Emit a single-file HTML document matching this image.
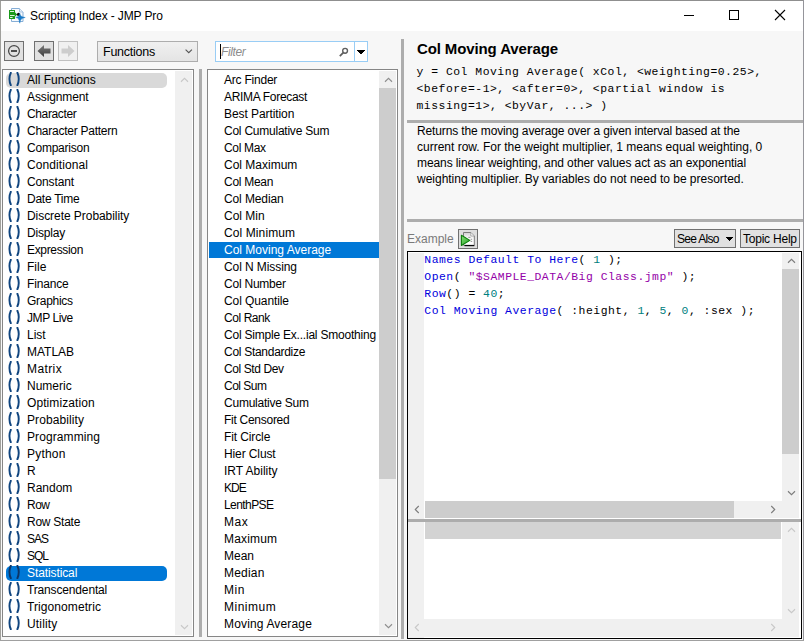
<!DOCTYPE html>
<html><head><meta charset="utf-8"><title>Scripting Index - JMP Pro</title>
<style>
html,body{margin:0;padding:0}
body{width:804px;height:641px;overflow:hidden;background:#f7f7f7;position:relative;font-family:"Liberation Sans",sans-serif;font-size:12px;color:#000}
div,span,svg{position:absolute;box-sizing:border-box}
.t{white-space:nowrap}
#titlebar{left:1px;top:1px;width:803px;height:30px;background:#fff}
#bt{left:0;top:0;width:804px;height:1px;background:#8f8f8f}
#bl{left:0;top:1px;width:1px;height:640px;background:#a0a09c}
#br{left:803px;top:0;width:1px;height:641px;background:#95959b}
#bb{left:0;top:640px;width:804px;height:1px;background:#a0a0a0}
.btn{background:#e1e1e1;border:1px solid #707070}
.btn.dis{background:#f0f0f0;border-color:#c0c0c0}
.panel{background:#fff;border:1px solid #868686}
.split{background:#adadad}
.row{left:3px;width:161px;height:15px;border-radius:5px;line-height:14px}
.row.hot{background:#d9d9d9}
.row.sel{background:#0078d7;color:#fff}
.row .t{left:21px;top:0}
.pa{left:1px;top:-1px;fill:none;stroke:#10457f;stroke-width:1.9}
.row.sel .pa{stroke:#0d3565}
.mrow{left:1px;width:170px;height:16px;line-height:16px}
.mrow.sel{background:#0078d7;color:#fff}
.mrow .t{left:15px;top:0}
.sb{background:#f0f0f0}
.thumb{background:#cdcdcd}
.ch{fill:none;stroke:#606060;stroke-width:1.1}
.ch.dis{stroke:#c8c8c8}.ch.mid{stroke:#8e8e8e}.ch.en{stroke:#7c7c7c}
.mono{font-family:"Liberation Mono",monospace;font-size:11.4px;letter-spacing:0.512px;white-space:pre}
.kw{color:#0000dd}.num{color:#008080}.str{color:#9400a8}
</style></head><body>
<div id="titlebar"></div><div id="bt"></div><div id="bl"></div><div id="br"></div><div id="bb"></div>
<!-- app icon -->
<svg style="left:8px;top:7px" width="18" height="18" viewBox="0 0 18 18">
<path d="M3.5,1.5 H11.5 L15,5 V14.5 H3.5 Z" fill="#f7fafd" stroke="#86aed6" stroke-width="1"/>
<path d="M11.5,1.5 V5 H15" fill="#e6eef7" stroke="#9dbde0" stroke-width="0.9"/>
<path d="M1,3 H7 V5.2 L9.2,7.5 L7,9.8 V12 H1 Z" fill="#1b9a1b"/>
<rect x="2" y="4" width="4" height="1" fill="#dff3df"/><rect x="2" y="8" width="4.6" height="1" fill="#dff3df"/><rect x="2" y="10" width="2.6" height="1" fill="#dff3df"/>
<circle cx="10.5" cy="7.4" r="1.6" fill="#0a0a0a"/>
<path d="M11.75,6.3 Q12.1,10.1 17.2,10.5 Q12.1,10.9 11.75,16.2 Q11.4,10.9 7.8,10.5 Q11.4,10.1 11.75,6.3 Z" fill="#1679c6" stroke="#1679c6" stroke-width="0.5"/>
</svg>
<span class="t" style="left:30px;top:8px;line-height:16px;font-size:12px;letter-spacing:-0.125px">Scripting Index - JMP Pro</span>
<!-- window controls -->
<svg style="left:680px;top:5px" width="120" height="22" viewBox="0 0 120 22" shape-rendering="crispEdges">
<rect x="4" y="10" width="10" height="1" fill="#000"/>
<rect x="49.5" y="5.5" width="9" height="9" fill="none" stroke="#000" stroke-width="1"/>
</svg>
<svg style="left:774px;top:9px" width="12" height="12" viewBox="0 0 12 12"><path d="M1,1 L11,11 M11,1 L1,11" stroke="#000" stroke-width="1.1" fill="none"/></svg>

<!-- toolbar -->
<div class="btn" style="left:4px;top:41px;width:20px;height:20px">
<svg style="left:2px;top:2px" width="14" height="14" viewBox="0 0 14 14"><circle cx="7" cy="7" r="5.4" fill="none" stroke="#444" stroke-width="1.2"/><rect x="4" y="6.1" width="6" height="1.8" fill="#3e3e3e"/></svg>
</div>
<div class="btn" style="left:34px;top:41px;width:20px;height:20px">
<svg style="left:2px;top:2px" width="14" height="14" viewBox="0 0 14 14"><defs><linearGradient id="ga" x1="0" y1="0" x2="0" y2="1"><stop offset="0" stop-color="#7a7a7a"/><stop offset="1" stop-color="#3c3c3c"/></linearGradient></defs><path d="M0.5,7 L7,1 V4.5 H13.5 V9.5 H7 V13 Z" fill="url(#ga)"/></svg>
</div>
<div class="btn dis" style="left:58px;top:41px;width:20px;height:20px">
<svg style="left:2px;top:2px" width="14" height="14" viewBox="0 0 14 14"><path d="M13.5,7 L7,1 V4.5 H0.5 V9.5 H7 V13 Z" fill="#cdcdcd"/></svg>
</div>
<div class="btn" style="left:97px;top:41px;width:101px;height:21px;border-color:#adadad;background:linear-gradient(#f0f0f0,#e4e4e4)">
<span class="t" style="left:5px;top:2px;line-height:16px;font-size:12.5px;letter-spacing:-0.251px">Functions</span>
<svg style="left:87px;top:7px" width="8" height="5" viewBox="0 0 8 5"><path d="M0.6,0.6 L3.75,3.75 L6.9,0.6" class="ch" style="stroke:#555"/></svg>
</div>
<div style="left:215px;top:41px;width:153px;height:21px;background:#fff;border:1px solid #99cdf5">
<div style="left:4px;top:2px;width:1px;height:15px;background:#000"></div>
<span class="t" style="left:5px;top:2px;line-height:16px;font-style:italic;color:#8c8c8c;font-size:12px;letter-spacing:-0.400px">Filter</span>
<svg style="left:122px;top:3.5px" width="12" height="12" viewBox="0 0 12 12"><circle cx="7.1" cy="4.8" r="2.4" fill="none" stroke="#5e5e5e" stroke-width="1.4"/><path d="M5.3,6.6 L1.8,10.1" stroke="#5e5e5e" stroke-width="1.8"/></svg>
<div style="left:138px;top:0;width:1px;height:19px;background:#99cdf5"></div>
<svg style="left:141px;top:8px" width="8" height="4" viewBox="0 0 8 4" shape-rendering="crispEdges"><rect x="0" y="0" width="8" height="1"/><rect x="1" y="1" width="6" height="1"/><rect x="2" y="2" width="4" height="1"/><rect x="3" y="3" width="2" height="1"/></svg>
</div>

<!-- left list -->
<div class="panel" style="left:2px;top:69px;width:192px;height:568px">
<div class="row hot" style="top:3px"><svg class="pa" width="14" height="14" viewBox="0 0 14 14"><path d="M4.1,0 Q0.8,7 4.1,14" /><path d="M10.1,0 Q13.4,7 10.1,14" /></svg><span class="t" style="letter-spacing:0.000px">All Functions</span></div>
<div class="row" style="top:20px"><svg class="pa" width="14" height="14" viewBox="0 0 14 14"><path d="M4.1,0 Q0.8,7 4.1,14" /><path d="M10.1,0 Q13.4,7 10.1,14" /></svg><span class="t" style="letter-spacing:-0.111px">Assignment</span></div>
<div class="row" style="top:37px"><svg class="pa" width="14" height="14" viewBox="0 0 14 14"><path d="M4.1,0 Q0.8,7 4.1,14" /><path d="M10.1,0 Q13.4,7 10.1,14" /></svg><span class="t" style="letter-spacing:-0.375px">Character</span></div>
<div class="row" style="top:54px"><svg class="pa" width="14" height="14" viewBox="0 0 14 14"><path d="M4.1,0 Q0.8,7 4.1,14" /><path d="M10.1,0 Q13.4,7 10.1,14" /></svg><span class="t" style="letter-spacing:-0.250px">Character Pattern</span></div>
<div class="row" style="top:71px"><svg class="pa" width="14" height="14" viewBox="0 0 14 14"><path d="M4.1,0 Q0.8,7 4.1,14" /><path d="M10.1,0 Q13.4,7 10.1,14" /></svg><span class="t" style="letter-spacing:-0.223px">Comparison</span></div>
<div class="row" style="top:88px"><svg class="pa" width="14" height="14" viewBox="0 0 14 14"><path d="M4.1,0 Q0.8,7 4.1,14" /><path d="M10.1,0 Q13.4,7 10.1,14" /></svg><span class="t" style="letter-spacing:0.100px">Conditional</span></div>
<div class="row" style="top:105px"><svg class="pa" width="14" height="14" viewBox="0 0 14 14"><path d="M4.1,0 Q0.8,7 4.1,14" /><path d="M10.1,0 Q13.4,7 10.1,14" /></svg><span class="t" style="letter-spacing:-0.143px">Constant</span></div>
<div class="row" style="top:122px"><svg class="pa" width="14" height="14" viewBox="0 0 14 14"><path d="M4.1,0 Q0.8,7 4.1,14" /><path d="M10.1,0 Q13.4,7 10.1,14" /></svg><span class="t" style="letter-spacing:-0.250px">Date Time</span></div>
<div class="row" style="top:139px"><svg class="pa" width="14" height="14" viewBox="0 0 14 14"><path d="M4.1,0 Q0.8,7 4.1,14" /><path d="M10.1,0 Q13.4,7 10.1,14" /></svg><span class="t" style="letter-spacing:-0.053px">Discrete Probability</span></div>
<div class="row" style="top:156px"><svg class="pa" width="14" height="14" viewBox="0 0 14 14"><path d="M4.1,0 Q0.8,7 4.1,14" /><path d="M10.1,0 Q13.4,7 10.1,14" /></svg><span class="t" style="letter-spacing:-0.167px">Display</span></div>
<div class="row" style="top:173px"><svg class="pa" width="14" height="14" viewBox="0 0 14 14"><path d="M4.1,0 Q0.8,7 4.1,14" /><path d="M10.1,0 Q13.4,7 10.1,14" /></svg><span class="t" style="letter-spacing:-0.334px">Expression</span></div>
<div class="row" style="top:190px"><svg class="pa" width="14" height="14" viewBox="0 0 14 14"><path d="M4.1,0 Q0.8,7 4.1,14" /><path d="M10.1,0 Q13.4,7 10.1,14" /></svg><span class="t" style="letter-spacing:0.000px">File</span></div>
<div class="row" style="top:207px"><svg class="pa" width="14" height="14" viewBox="0 0 14 14"><path d="M4.1,0 Q0.8,7 4.1,14" /><path d="M10.1,0 Q13.4,7 10.1,14" /></svg><span class="t" style="letter-spacing:-0.167px">Finance</span></div>
<div class="row" style="top:224px"><svg class="pa" width="14" height="14" viewBox="0 0 14 14"><path d="M4.1,0 Q0.8,7 4.1,14" /><path d="M10.1,0 Q13.4,7 10.1,14" /></svg><span class="t" style="letter-spacing:-0.286px">Graphics</span></div>
<div class="row" style="top:241px"><svg class="pa" width="14" height="14" viewBox="0 0 14 14"><path d="M4.1,0 Q0.8,7 4.1,14" /><path d="M10.1,0 Q13.4,7 10.1,14" /></svg><span class="t" style="letter-spacing:-0.429px">JMP Live</span></div>
<div class="row" style="top:258px"><svg class="pa" width="14" height="14" viewBox="0 0 14 14"><path d="M4.1,0 Q0.8,7 4.1,14" /><path d="M10.1,0 Q13.4,7 10.1,14" /></svg><span class="t" style="letter-spacing:0.000px">List</span></div>
<div class="row" style="top:275px"><svg class="pa" width="14" height="14" viewBox="0 0 14 14"><path d="M4.1,0 Q0.8,7 4.1,14" /><path d="M10.1,0 Q13.4,7 10.1,14" /></svg><span class="t" style="letter-spacing:0.000px">MATLAB</span></div>
<div class="row" style="top:292px"><svg class="pa" width="14" height="14" viewBox="0 0 14 14"><path d="M4.1,0 Q0.8,7 4.1,14" /><path d="M10.1,0 Q13.4,7 10.1,14" /></svg><span class="t" style="letter-spacing:0.400px">Matrix</span></div>
<div class="row" style="top:309px"><svg class="pa" width="14" height="14" viewBox="0 0 14 14"><path d="M4.1,0 Q0.8,7 4.1,14" /><path d="M10.1,0 Q13.4,7 10.1,14" /></svg><span class="t" style="letter-spacing:0.000px">Numeric</span></div>
<div class="row" style="top:326px"><svg class="pa" width="14" height="14" viewBox="0 0 14 14"><path d="M4.1,0 Q0.8,7 4.1,14" /><path d="M10.1,0 Q13.4,7 10.1,14" /></svg><span class="t" style="letter-spacing:0.091px">Optimization</span></div>
<div class="row" style="top:343px"><svg class="pa" width="14" height="14" viewBox="0 0 14 14"><path d="M4.1,0 Q0.8,7 4.1,14" /><path d="M10.1,0 Q13.4,7 10.1,14" /></svg><span class="t" style="letter-spacing:0.100px">Probability</span></div>
<div class="row" style="top:360px"><svg class="pa" width="14" height="14" viewBox="0 0 14 14"><path d="M4.1,0 Q0.8,7 4.1,14" /><path d="M10.1,0 Q13.4,7 10.1,14" /></svg><span class="t" style="letter-spacing:0.100px">Programming</span></div>
<div class="row" style="top:377px"><svg class="pa" width="14" height="14" viewBox="0 0 14 14"><path d="M4.1,0 Q0.8,7 4.1,14" /><path d="M10.1,0 Q13.4,7 10.1,14" /></svg><span class="t" style="letter-spacing:0.200px">Python</span></div>
<div class="row" style="top:394px"><svg class="pa" width="14" height="14" viewBox="0 0 14 14"><path d="M4.1,0 Q0.8,7 4.1,14" /><path d="M10.1,0 Q13.4,7 10.1,14" /></svg><span class="t" style="letter-spacing:-2.000px">R</span></div>
<div class="row" style="top:411px"><svg class="pa" width="14" height="14" viewBox="0 0 14 14"><path d="M4.1,0 Q0.8,7 4.1,14" /><path d="M10.1,0 Q13.4,7 10.1,14" /></svg><span class="t" style="letter-spacing:0.000px">Random</span></div>
<div class="row" style="top:428px"><svg class="pa" width="14" height="14" viewBox="0 0 14 14"><path d="M4.1,0 Q0.8,7 4.1,14" /><path d="M10.1,0 Q13.4,7 10.1,14" /></svg><span class="t" style="letter-spacing:-0.500px">Row</span></div>
<div class="row" style="top:445px"><svg class="pa" width="14" height="14" viewBox="0 0 14 14"><path d="M4.1,0 Q0.8,7 4.1,14" /><path d="M10.1,0 Q13.4,7 10.1,14" /></svg><span class="t" style="letter-spacing:-0.250px">Row State</span></div>
<div class="row" style="top:462px"><svg class="pa" width="14" height="14" viewBox="0 0 14 14"><path d="M4.1,0 Q0.8,7 4.1,14" /><path d="M10.1,0 Q13.4,7 10.1,14" /></svg><span class="t" style="letter-spacing:-1.000px">SAS</span></div>
<div class="row" style="top:479px"><svg class="pa" width="14" height="14" viewBox="0 0 14 14"><path d="M4.1,0 Q0.8,7 4.1,14" /><path d="M10.1,0 Q13.4,7 10.1,14" /></svg><span class="t" style="letter-spacing:-1.000px">SQL</span></div>
<div class="row sel" style="top:496px"><svg class="pa" width="14" height="14" viewBox="0 0 14 14"><path d="M4.1,0 Q0.8,7 4.1,14" /><path d="M10.1,0 Q13.4,7 10.1,14" /></svg><span class="t" style="letter-spacing:-0.100px">Statistical</span></div>
<div class="row" style="top:513px"><svg class="pa" width="14" height="14" viewBox="0 0 14 14"><path d="M4.1,0 Q0.8,7 4.1,14" /><path d="M10.1,0 Q13.4,7 10.1,14" /></svg><span class="t" style="letter-spacing:-0.154px">Transcendental</span></div>
<div class="row" style="top:530px"><svg class="pa" width="14" height="14" viewBox="0 0 14 14"><path d="M4.1,0 Q0.8,7 4.1,14" /><path d="M10.1,0 Q13.4,7 10.1,14" /></svg><span class="t" style="letter-spacing:0.084px">Trigonometric</span></div>
<div class="row" style="top:547px"><svg class="pa" width="14" height="14" viewBox="0 0 14 14"><path d="M4.1,0 Q0.8,7 4.1,14" /><path d="M10.1,0 Q13.4,7 10.1,14" /></svg><span class="t" style="letter-spacing:0.166px">Utility</span></div>
<div class="sb" style="left:172px;top:1px;width:17px;height:564px">
</div>
</div>
<div class="split" style="left:199px;top:69px;width:3px;height:568px"></div>
<!-- middle list -->
<div class="panel" style="left:207px;top:69px;width:191px;height:568px">
<div class="mrow" style="top:2px"><span class="t" style="letter-spacing:-0.222px">Arc Finder</span></div>
<div class="mrow" style="top:19px"><span class="t" style="letter-spacing:-0.308px">ARIMA Forecast</span></div>
<div class="mrow" style="top:36px"><span class="t" style="letter-spacing:-0.077px">Best Partition</span></div>
<div class="mrow" style="top:53px"><span class="t" style="letter-spacing:-0.235px">Col Cumulative Sum</span></div>
<div class="mrow" style="top:70px"><span class="t" style="letter-spacing:-0.333px">Col Max</span></div>
<div class="mrow" style="top:87px"><span class="t" style="letter-spacing:0.000px">Col Maximum</span></div>
<div class="mrow" style="top:104px"><span class="t" style="letter-spacing:-0.286px">Col Mean</span></div>
<div class="mrow" style="top:121px"><span class="t" style="letter-spacing:-0.112px">Col Median</span></div>
<div class="mrow" style="top:138px"><span class="t" style="letter-spacing:-0.000px">Col Min</span></div>
<div class="mrow" style="top:155px"><span class="t" style="letter-spacing:0.100px">Col Minimum</span></div>
<div class="mrow sel" style="top:172px"><span class="t" style="letter-spacing:0.000px">Col Moving Average</span></div>
<div class="mrow" style="top:189px"><span class="t" style="letter-spacing:-0.083px">Col N Missing</span></div>
<div class="mrow" style="top:206px"><span class="t" style="letter-spacing:-0.223px">Col Number</span></div>
<div class="mrow" style="top:223px"><span class="t" style="letter-spacing:-0.091px">Col Quantile</span></div>
<div class="mrow" style="top:240px"><span class="t" style="letter-spacing:-0.428px">Col Rank</span></div>
<div class="mrow" style="top:257px"><span class="t" style="letter-spacing:-0.214px">Col Simple Ex...ial Smoothing</span></div>
<div class="mrow" style="top:274px"><span class="t" style="letter-spacing:-0.286px">Col Standardize</span></div>
<div class="mrow" style="top:291px"><span class="t" style="letter-spacing:-0.400px">Col Std Dev</span></div>
<div class="mrow" style="top:308px"><span class="t" style="letter-spacing:-0.501px">Col Sum</span></div>
<div class="mrow" style="top:325px"><span class="t" style="letter-spacing:-0.231px">Cumulative Sum</span></div>
<div class="mrow" style="top:342px"><span class="t" style="letter-spacing:-0.274px">Fit Censored</span></div>
<div class="mrow" style="top:359px"><span class="t" style="letter-spacing:-0.110px">Fit Circle</span></div>
<div class="mrow" style="top:376px"><span class="t" style="letter-spacing:-0.110px">Hier Clust</span></div>
<div class="mrow" style="top:393px"><span class="t" style="letter-spacing:0.000px">IRT Ability</span></div>
<div class="mrow" style="top:410px"><span class="t" style="letter-spacing:-1.000px">KDE</span></div>
<div class="mrow" style="top:427px"><span class="t" style="letter-spacing:-0.571px">LenthPSE</span></div>
<div class="mrow" style="top:444px"><span class="t" style="letter-spacing:0.500px">Max</span></div>
<div class="mrow" style="top:461px"><span class="t" style="letter-spacing:0.167px">Maximum</span></div>
<div class="mrow" style="top:478px"><span class="t" style="letter-spacing:0.000px">Mean</span></div>
<div class="mrow" style="top:495px"><span class="t" style="letter-spacing:0.200px">Median</span></div>
<div class="mrow" style="top:512px"><span class="t" style="letter-spacing:0.500px">Min</span></div>
<div class="mrow" style="top:529px"><span class="t" style="letter-spacing:0.500px">Minimum</span></div>
<div class="mrow" style="top:546px"><span class="t" style="letter-spacing:0.153px">Moving Average</span></div>
<div class="sb" style="left:171px;top:1px;width:17px;height:564px">
<div class="thumb" style="left:0;top:17px;width:17px;height:391px"></div>
</div>
</div>
<div class="split" style="left:401px;top:39px;width:3px;height:600px"></div>
<svg style="left:179.90px;top:76.50px" width="9" height="6" viewBox="0 0 9 6"><path d="M1,4.75 L4.5,1.25 L8,4.75" class="ch dis"/></svg>
<svg style="left:179.80px;top:623.60px" width="9" height="6" viewBox="0 0 9 6"><path d="M1,1.25 L4.5,4.75 L8,1.25" class="ch dis"/></svg>
<svg style="left:384.00px;top:76.70px" width="9" height="6" viewBox="0 0 9 6"><path d="M1,4.75 L4.5,1.25 L8,4.75" class="ch mid"/></svg>
<svg style="left:383.90px;top:623.40px" width="9" height="6" viewBox="0 0 9 6"><path d="M1,1.25 L4.5,4.75 L8,1.25" class="ch mid"/></svg>

<!-- right pane -->
<span class="t" style="left:417px;top:40px;font-weight:bold;font-size:15px;line-height:18px;letter-spacing:-0.118px">Col Moving Average</span>
<span class="mono" style="left:416.5px;top:64px;line-height:17px">y = Col Moving Average( xCol, &lt;weighting=0.25&gt;,
&lt;before=-1&gt;, &lt;after=0&gt;, &lt;partial window is
missing=1&gt;, &lt;byVar, ...&gt; )</span>
<div class="split" style="left:407px;top:120px;width:396px;height:3px"></div>
<span class="t" style="left:417px;top:123px;line-height:16px;letter-spacing:-0.133px">Returns the moving average over a given interval based at the</span>
<span class="t" style="left:417px;top:139px;line-height:16px;letter-spacing:-0.004px">current row. For the weight multiplier, 1 means equal weighting, 0</span>
<span class="t" style="left:417px;top:155px;line-height:16px;letter-spacing:-0.095px">means linear weighting, and other values act as an exponential</span>
<span class="t" style="left:417px;top:171px;line-height:16px;letter-spacing:-0.012px">weighting multiplier. By variables do not need to be presorted.</span>
<div class="split" style="left:407px;top:219px;width:396px;height:3px"></div>
<span class="t" style="left:407px;top:231px;line-height:16px;color:#7a7a7a;letter-spacing:0.000px">Example</span>
<div class="btn" style="left:458px;top:229px;width:20px;height:20px;border-color:#707070;background:#dedede">
<svg style="left:0;top:0" width="18" height="18" viewBox="0 0 18 18">
<defs><linearGradient id="gp" x1="0" y1="0" x2="0" y2="1"><stop offset="0" stop-color="#d0d0d0"/><stop offset="0.5" stop-color="#ffffff"/><stop offset="1" stop-color="#ffffff"/></linearGradient>
<linearGradient id="gt" x1="0" y1="0" x2="1" y2="1"><stop offset="0" stop-color="#8be07a"/><stop offset="1" stop-color="#1f9e1f"/></linearGradient></defs>
<path d="M4.5,2.5 H11.8 L15.3,6 V15.3 H4.5 Z" fill="url(#gp)" stroke="#7c7c7c" stroke-width="1"/>
<path d="M11.8,2.8 V6 H15" fill="#fff" stroke="#9a9a9a" stroke-width="0.8"/>
<path d="M5.5,15.6 H15.3" stroke="#0a0a0a" stroke-width="1.2"/>
<rect x="9.3" y="6.9" width="2.2" height="0.9" fill="#8a8a8a"/><rect x="11.6" y="8.8" width="1.6" height="0.9" fill="#8a8a8a"/><rect x="11.6" y="10.9" width="1.6" height="0.9" fill="#8a8a8a"/>
<path d="M2.4,5.3 L10.9,10.4 L2.4,15.5 Z" fill="url(#gt)" stroke="#0b7d0b" stroke-width="1.1" stroke-linejoin="round"/>
</svg>
</div>
<div class="btn" style="left:674px;top:229px;width:62px;height:19px;border-color:#707070">
<span class="t" style="left:2px;top:1px;line-height:17px;letter-spacing:-0.714px">See Also</span>
<svg style="left:51px;top:7px" width="7" height="4" viewBox="0 0 7 4" shape-rendering="crispEdges"><rect x="0" y="0" width="7" height="1"/><rect x="1" y="1" width="5" height="1"/><rect x="2" y="2" width="3" height="1"/><rect x="3" y="3" width="1" height="1"/></svg>
</div>
<div class="btn" style="left:740px;top:229px;width:60px;height:19px;border-color:#707070">
<span class="t" style="left:2px;top:1px;line-height:17px;letter-spacing:-0.223px">Topic Help</span>
</div>

<!-- code + log panel -->
<div style="left:407px;top:251px;width:395px;height:388px;background:#fff;border:1px solid #000">
<div class="sb" style="left:0;top:1px;width:16px;height:385px"></div>
<span class="mono" style="left:16.3px;top:0px;line-height:17px"><span class="kw" style="position:static">Names Default To Here</span>( <span class="num" style="position:static">1</span> );
<span class="kw" style="position:static">Open</span>( <span class="str" style="position:static">"$SAMPLE_DATA/Big Class.jmp"</span> );
<span class="kw" style="position:static">Row</span>() = <span class="num" style="position:static">40</span>;
<span class="kw" style="position:static">Col Moving Average</span>( :height, <span class="num" style="position:static">1</span>, <span class="num" style="position:static">5</span>, <span class="num" style="position:static">0</span>, :sex );</span>
<!-- code vscroll -->
<div class="sb" style="left:374px;top:1px;width:17px;height:265px">
<div class="thumb" style="left:0;top:16px;width:17px;height:185px"></div>
</div>
<!-- code hscroll -->
<div class="sb" style="left:17px;top:249px;width:357px;height:17px">
<div class="thumb" style="left:0;top:0;width:309px;height:17px"></div>
</div>
<div class="split" style="left:0;top:267px;width:393px;height:3px"></div>
<!-- log -->
<div style="left:17px;top:270px;width:356px;height:17px;background:#d3d3d3"></div>
<div class="sb" style="left:374px;top:270px;width:17px;height:115px"></div>
<div class="sb" style="left:0;top:367px;width:391px;height:18px"></div>
</div>
<svg style="left:787.00px;top:257.70px" width="9" height="6" viewBox="0 0 9 6"><path d="M1,4.75 L4.5,1.25 L8,4.75" class="ch en"/></svg>
<svg style="left:787.00px;top:489.80px" width="9" height="6" viewBox="0 0 9 6"><path d="M1,1.25 L4.5,4.75 L8,1.25" class="ch en"/></svg>
<svg style="left:413.50px;top:505.00px" width="6" height="9" viewBox="0 0 6 9"><path d="M4.75,1 L1.25,4.5 L4.75,8" class="ch en"/></svg>
<svg style="left:770.20px;top:505.00px" width="6" height="9" viewBox="0 0 6 9"><path d="M1.25,1 L4.75,4.5 L1.25,8" class="ch en"/></svg>
<svg style="left:787.00px;top:527.30px" width="9" height="6" viewBox="0 0 9 6"><path d="M1,4.75 L4.5,1.25 L8,4.75" class="ch dis"/></svg>
<svg style="left:787.00px;top:607.50px" width="9" height="6" viewBox="0 0 9 6"><path d="M1,1.25 L4.5,4.75 L8,1.25" class="ch dis"/></svg>
<svg style="left:413.50px;top:623.20px" width="6" height="9" viewBox="0 0 6 9"><path d="M4.75,1 L1.25,4.5 L4.75,8" class="ch dis"/></svg>
<svg style="left:770.00px;top:623.20px" width="6" height="9" viewBox="0 0 6 9"><path d="M1.25,1 L4.75,4.5 L1.25,8" class="ch dis"/></svg>
</body></html>
